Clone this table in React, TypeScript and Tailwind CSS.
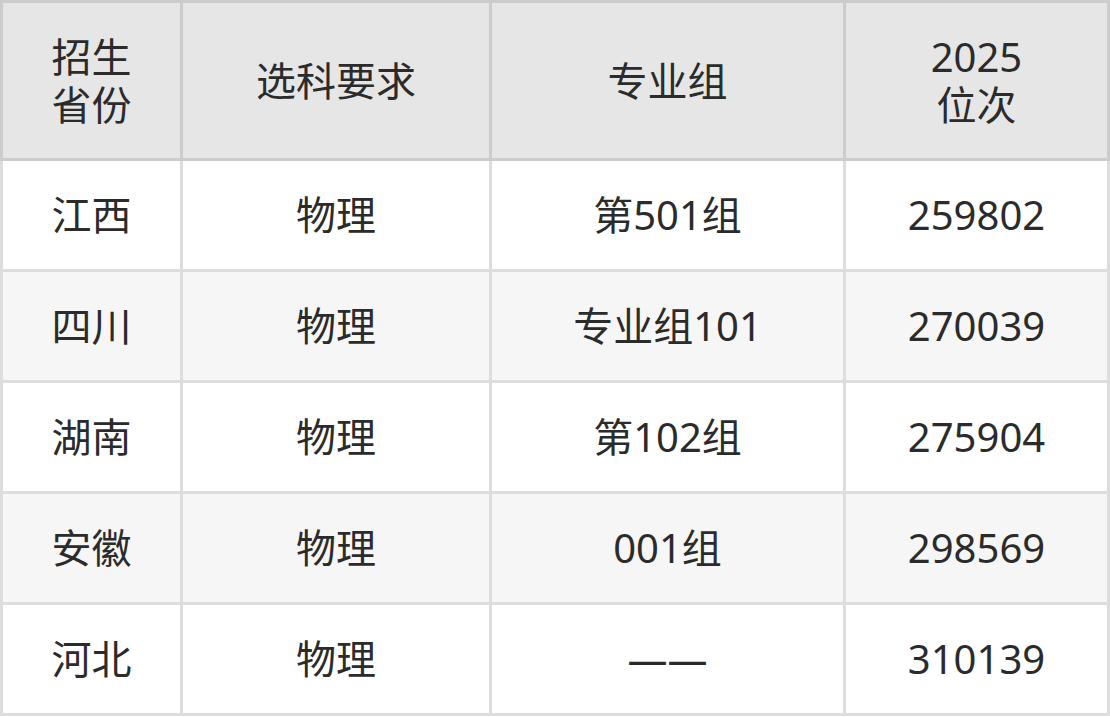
const header = ["招生\n省份", "选科要求", "专业组", "2025\n位次"]

const rows = [
  ["江西", "物理", "第501组", "259802"],
  ["四川", "物理", "专业组101", "270039"],
  ["湖南", "物理", "第102组", "275904"],
  ["安徽", "物理", "001组", "298569"],
  ["河北", "物理", "——", "310139"],
]

export default function App() {
  return (
    <div className="w-[1110px] h-[717px] bg-white font-['Noto_Sans','Noto_Sans_CJK_SC',sans-serif] text-[40px] leading-[48px] text-[#2b2b2b]">
      <table className="w-[1110px] table-fixed border-collapse">
        <colgroup>
          <col className="w-[180px]" />
          <col className="w-[309px]" />
          <col className="w-[354px]" />
          <col className="w-[264px]" />
        </colgroup>
        <thead>
          <tr className="bg-[#e6e6e6]">
            {header.map((h) => (
              <th
                key={h}
                className="h-[158px] border-[3px] border-[#cccccc] text-center align-middle font-normal whitespace-pre-line"
              >
                {h}
              </th>
            ))}
          </tr>
        </thead>
        <tbody>
          {rows.map((r, i) => (
            <tr key={r[0]} className={i % 2 === 1 ? "bg-[#f6f6f6]" : "bg-white"}>
              {r.map((c, j) => (
                <td
                  key={j}
                  className="h-[111px] border-[3px] border-[#dddddd] text-center align-middle"
                >
                  {c}
                </td>
              ))}
            </tr>
          ))}
        </tbody>
      </table>
    </div>
  )
}
